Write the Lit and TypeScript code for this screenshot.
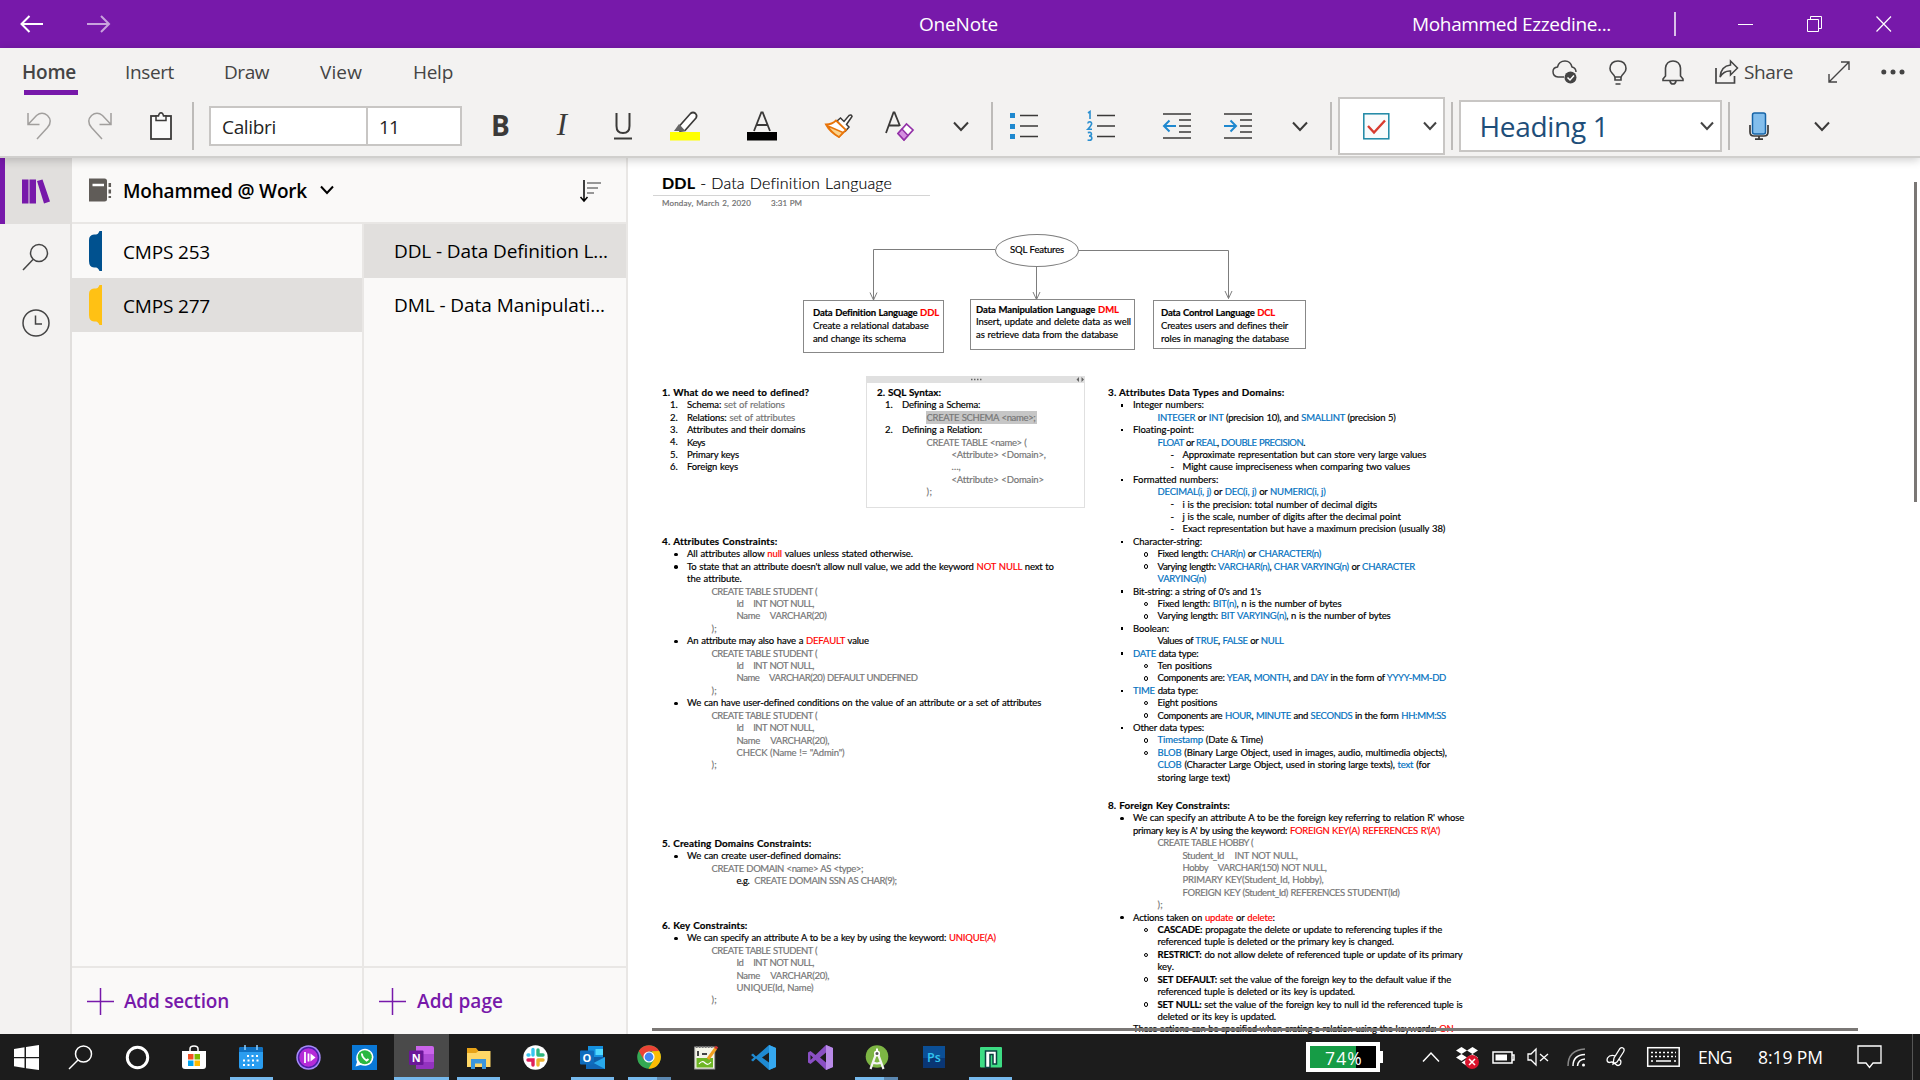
import { LitElement, html, svg, css, nothing } from "lit";
import type { SVGTemplateResult, TemplateResult } from "lit";
import { customElement } from "lit/decorators.js";

/** Inline SVG icon with a pixel-sized view box. */
const icon = (w: number, h: number, body: SVGTemplateResult, cls = "") =>
  html`<svg class="ic ${cls}" width=${w} height=${h} viewBox="0 0 ${w} ${h}" fill="none" stroke="currentColor" stroke-width="1.5">${body}</svg>`;

/** Single-line text spaced so that it fills exactly w pixels. */
const fit = (text: unknown, w: number, cls = "") => html`<span class="fit ${cls}" data-w=${w}>${text}</span>`;

const chevron = (w = 16, h = 9) =>
  icon(w, h + 2, svg`<path stroke-width="2" d="M1 1.5L${w / 2} ${h}L${w - 1} 1.5"/>`, "chev");

/** Turns "plain {r|red} plain" into styled runs: r red, u blue, g gray, b bold, k black, h highlighted. */
const rich = (s: string): TemplateResult[] =>
  s.split(/(\{[a-z]\|[^}]*\})/).filter(Boolean).map((p) => {
    const m = /^\{([a-z])\|([^}]*)\}$/.exec(p);
    return m ? html`<span class="c-${m[1]}">${m[2]}</span>` : html`${p}`;
  });

/** indent level, marker, width in px, text */
type Line = [number, string, number, string];

const N1: Line[] = [
  [0, "", 147, "1. What do we need to defined?"],
  [1, "1.", 98, "Schema: {g|set of relations}"],
  [1, "2.", 108, "Relations: {g|set of attributes}"],
  [1, "3.", 118, "Attributes and their domains"],
  [1, "4.", 18, "Keys"],
  [1, "5.", 52, "Primary keys"],
  [1, "6.", 51, "Foreign keys"],
];
const N2: Line[] = [
  [0, "", 64, "2. SQL Syntax:"],
  [1, "1.", 78, "Defining a Schema:"],
  [2, "", 109, "{h|CREATE SCHEMA <name>;}"],
  [1, "2.", 80, "Defining a Relation:"],
  [2, "", 100, "{g|CREATE TABLE <name> (}"],
  [3, "", 94, "{g|<Attribute> <Domain>,}"],
  [3, "", 9, "{g|…,}"],
  [3, "", 92, "{g|<Attribute> <Domain>}"],
  [2, "", 6, "{g|);}"],
];
const N3: Line[] = [
  [0, "", 176, "3. Attributes Data Types and Domains:"],
  [1, "sq", 71, "Integer numbers:"],
  [2, "", 238, "{u|INTEGER} or {u|INT} (precision 10), and {u|SMALLINT} (precision 5)"],
  [1, "sq", 61, "Floating-point:"],
  [2, "", 147.5, "{u|FLOAT} or {u|REAL}, {u|DOUBLE PRECISION}."],
  [3, "-", 244, "Approximate representation but can store very large values"],
  [3, "-", 227.5, "Might cause impreciseness when comparing two values"],
  [1, "sq", 85, "Formatted numbers:"],
  [2, "", 168, "{u|DECIMAL(i, j)} or {u|DEC(i, j)} or {u|NUMERIC(i, j)}"],
  [3, "-", 194.5, "i is the precision: total number of decimal digits"],
  [3, "-", 218, "j is the scale, number of digits after the decimal point"],
  [3, "-", 263, "Exact representation but have a maximum precision (usually 38)"],
  [1, "sq", 69, "Character-string:"],
  [2, "o", 163.5, "Fixed length: {u|CHAR(n)} or {u|CHARACTER(n)}"],
  [2, "o", 257.5, "Varying length: {u|VARCHAR(n)}, {u|CHAR VARYING(n)} or {u|CHARACTER}"],
  [2, "", 48.5, "{u|VARYING(n)}"],
  [1, "sq", 128, "Bit-string: a string of 0's and 1's"],
  [2, "o", 184, "Fixed length: {u|BIT(n)}, n is the number of bytes"],
  [2, "o", 233, "Varying length: {u|BIT VARYING(n)}, n is the number of bytes"],
  [1, "sq", 36, "Boolean:"],
  [2, "", 126, "Values of {u|TRUE}, {u|FALSE} or {u|NULL}"],
  [1, "sq", 65.5, "{u|DATE} data type:"],
  [2, "o", 54.5, "Ten positions"],
  [2, "o", 288.5, "Components are: {u|YEAR}, {u|MONTH}, and {u|DAY} in the form of {u|YYYY-MM-DD}"],
  [1, "sq", 65, "{u|TIME} data type:"],
  [2, "o", 60, "Eight positions"],
  [2, "o", 288.5, "Components are {u|HOUR}, {u|MINUTE} and {u|SECONDS} in the form {u|HH:MM:SS}"],
  [1, "sq", 71, "Other data types:"],
  [2, "o", 105.5, "{u|Timestamp} (Date & Time)"],
  [2, "o", 289.5, "{u|BLOB} (Binary Large Object, used in images, audio, multimedia objects),"],
  [2, "", 272.5, "{u|CLOB} (Character Large Object, used in storing large texts), {u|text} (for"],
  [2, "", 72.5, "storing large text)"],
];
const student: Line[] = [
  [2, "", 105.5, "{g|CREATE TABLE STUDENT (}"],
  [3, "", 77.5, "{g|Id    INT NOT NULL,}"],
];
const close: Line = [2, "", 5.5, "{g|);}"];
const N4: Line[] = [
  [0, "", 115, "4. Attributes Constraints:"],
  [1, "dot", 225.5, "All attributes allow {r|null} values unless stated otherwise."],
  [1, "dot", 366.5, "To state that an attribute doesn't allow null value, we add the keyword {r|NOT NULL} next to"],
  [1, "", 54.5, "the attribute."],
  ...student,
  [3, "", 90, "{g|Name    VARCHAR(20)}"],
  close,
  [1, "dot", 181.5, "An attribute may also have a {r|DEFAULT} value"],
  ...student,
  [3, "", 181, "{g|Name    VARCHAR(20) DEFAULT UNDEFINED}"],
  close,
  [1, "dot", 353.5, "We can have user-defined conditions on the value of an attribute or a set of attributes"],
  ...student,
  [3, "", 92.5, "{g|Name    VARCHAR(20),}"],
  [3, "", 108, "{g|CHECK (Name != \"Admin\")}"],
  close,
];
const N5: Line[] = [
  [0, "", 149.5, "5. Creating Domains Constraints:"],
  [1, "dot", 153.5, "We can create user-defined domains:"],
  [2, "", 151.5, "{g|CREATE DOMAIN <name> AS <type>;}"],
  [3, "", 160, "e.g.  {g|CREATE DOMAIN SSN AS CHAR(9);}"],
];
const N6: Line[] = [
  [0, "", 85.5, "6. Key Constraints:"],
  [1, "dot", 308.5, "We can specify an attribute A to be a key by using the keyword: {r|UNIQUE(A)}"],
  ...student,
  [3, "", 92.5, "{g|Name    VARCHAR(20),}"],
  [3, "", 77, "{g|UNIQUE(Id, Name)}"],
  close,
];
const N8: Line[] = [
  [0, "", 122, "8. Foreign Key Constraints:"],
  [1, "dot", 331, "We can specify an attribute A to be the foreign key referring to relation R' whose"],
  [1, "", 307, "primary key is A' by using the keyword: {r|FOREIGN KEY(A) REFERENCES R'(A')}"],
  [2, "", 95.5, "{g|CREATE TABLE HOBBY (}"],
  [3, "", 115, "{g|Student_Id    INT NOT NULL,}"],
  [3, "", 144, "{g|Hobby    VARCHAR(150) NOT NULL,}"],
  [3, "", 141, "{g|PRIMARY KEY(Student_Id, Hobby),}"],
  [3, "", 217, "{g|FOREIGN KEY (Student_Id) REFERENCES STUDENT(Id)}"],
  close,
  [1, "dot", 142, "Actions taken on {r|update} or {r|delete}:"],
  [2, "o", 284.5, "{b|CASCADE:} propagate the delete or update to referencing tuples if the"],
  [2, "", 236.5, "referenced tuple is deleted or the primary key is changed."],
  [2, "o", 305, "{b|RESTRICT:} do not allow delete of referenced tuple or update of its primary"],
  [2, "", 16.5, "key."],
  [2, "o", 293.5, "{b|SET DEFAULT:} set the value of the foreign key to the default value if the"],
  [2, "", 197.5, "referenced tuple is deleted or its key is updated."],
  [2, "o", 305, "{b|SET NULL:} set the value of the foreign key to null id the referenced tuple is"],
  [2, "", 118.5, "deleted or its key is updated."],
  [1, "dot", 321, "These actions can be specified when crating a relation using the keywords: {r|ON}"],
];

const I = {
  back: icon(24, 18, svg`<path stroke-width="2" d="M23 9H1.5M9.5 1L1.5 9L9.5 17"/>`),
  fwd: icon(24, 18, svg`<path stroke-width="2" d="M0 9H22M14 1L22 9L14 17"/>`, "faded"),
  undo: icon(24, 28, svg`<path d="M1 1V12.5H12.5M1 12.5L9.5 3.5Q15-1 20.500 3.500Q26 9 20.500 15.500L10 27"/>`, "dim"),
  redo: icon(24, 28, svg`<path d="M23 1V12.500H11.500M23 12.500L14.500 3.500Q9-1 3.500 3.500Q-2 9 3.500 15.500L14 27"/>`, "dim"),
  clip: icon(22, 28, svg`<rect x="1" y="4" width="20" height="23" fill="#fafafa" stroke-width="1.800"/><path fill="#fafafa" d="M6 8.500V4H8.500Q9 .8 11 .8Q13 .8 13.500 4H16V8.500Z"/>`),
  hl: icon(30, 30, svg`<path fill="#fff" stroke-width="1.700" d="M9 15.500L20.500 2.500Q23 .5 25.500 2.500Q27.500 4.500 26 7L15 19.500L10 20Z"/><path fill="#666" stroke="none" d="M9 13L15.500 20H4Z"/><rect y="21" width="30" height="8.500" fill="#ff0" stroke="none"/>`),
  fc: icon(30, 30, svg`<path stroke-width="1.800" d="M7 20L14.300 1.500H15.700L23 20M9.500 14H20.500"/><rect y="21" width="30" height="8.500" fill="#000" stroke="none"/>`),
  brush: icon(28, 26, svg`<path fill="#fff" d="M12 8L15.500 5L19 8.500L24 2.500Q26.500 1 27 3.500L21.500 11.500L24 14L20.500 18Z"/><path stroke="#e8750a" stroke-width="1.800" fill="#fff" d="M1 11.500Q7 11.500 11 7.500L21 17L14 24Q5 19 1 11.500Z"/><path fill="#fbd38c" stroke="#e8750a" d="M3 13L18 19.500L14 24Q6 19 3 13Z"/>`),
  clear: icon(30, 30, svg`<path stroke-width="1.800" d="M1 22L8.500 1.500H9.500L15 15M4 14.500H14.500"/><path fill="#fff" stroke="#9331a8" stroke-width="1.700" d="M13 22.500L21.500 13L28 19L19 29Z"/><path fill="#d48fe0" stroke="#9331a8" d="M13 22.500L17 18L23 24.500L19 29Z"/>`),
  bullets: icon(28, 28, svg`<path fill="#1e88cf" stroke="none" d="M0 1h5v5h-5zM0 12h5v5h-5zM0 22h5v5h-5z"/><path stroke-width="1.700" d="M10 3.500H28M10 14H28M10 24.500H28"/>`),
  numbers: icon(28, 32, svg`<path stroke="#2b8fd0" stroke-width="1.600" d="M1 3L3 1.500V9M.8 13.500Q1 11.800 2.800 11.800Q4.800 12 4.600 14Q4 16 .8 19.200H5M.8 22.600Q4.500 21.800 4.500 24.200Q4.300 26 2 26Q5 26 4.800 28.500Q4.300 31 .6 30"/><path stroke-width="1.700" d="M10 5.500H28M10 16H28M10 26.500H28"/>`),
  outdent: icon(28, 28, svg`<path stroke-width="1.700" d="M0 2H28M16 8H28M16 14H28M16 20H28M0 26H28"/><path stroke="#1e88cf" stroke-width="2" d="M13 14H1M6.500 8.500L1 14L6.500 19.500"/>`),
  indent: icon(28, 28, svg`<path stroke-width="1.700" d="M0 2H28M16 8H28M16 14H28M16 20H28M0 26H28"/><path stroke="#1e88cf" stroke-width="2" d="M0 14H12M6.500 8.500L12 14L6.500 19.500"/>`),
  check: icon(27, 27, svg`<rect x=".8" y=".8" width="25" height="25" fill="#f9fbfc" stroke="#1e87a5"/><path stroke="#d83b2f" stroke-width="2.400" d="M5 13L11 19.500L22 7.500"/>`),
  mic: icon(20, 28, svg`<rect x="3.500" y="1" width="13" height="21" rx="2" fill="#83beec" stroke="#1664a7"/><path stroke-width="1.700" d="M1 13V20Q1 24 5 24H15Q19 24 19 20V13M10 24V27M6 27.200H14"/>`),
  cloud: icon(25, 24, svg`<path d="M12 17H6Q1 16.500 1 11.500Q1 7.500 5.500 7Q7 1 13 1Q18.500 1 20 7Q24 8 24 12"/><circle cx="18.500" cy="17.500" r="6" fill="#444" stroke="none"/><path stroke="#fff" stroke-width="1.500" d="M15.500 17.500L18 20L22 15.500"/>`),
  bulb: icon(18, 25, svg`<path d="M6 20V17.500Q5.500 15.500 3 13Q1 11 1 8.500Q1.500 1 9 1Q16.500 1 17 8.500Q17 11 15 13Q12.500 15.500 12 17.500V20ZM6 17H12M6.500 24H11.500" stroke-width="1.600"/>`),
  bell: icon(22, 25, svg`<path stroke-width="1.600" d="M1 20.500V19L3.500 16V8Q4.500 1 11 1Q17.500 1 18.500 8V16L21 19V20.500ZM8 21Q8.500 24 11 24Q13.500 24 14 21"/>`),
  share: icon(24, 24, svg`<path stroke-width="1.700" d="M1 8V23H19.500V16"/><path d="M15.500 1L22.500 8L15.500 15V11Q9 10.500 5 17Q6 6 15.500 5Z"/>`),
  expand: icon(22, 22, svg`<path stroke-width="1.400" d="M1 21L21 1M13 1H21V9M1 13V21H9"/>`),
  dots: icon(24, 6, svg`<g fill="#444" stroke="none"><circle cx="2.800" cy="3" r="2.500"/><circle cx="12" cy="3" r="2.500"/><circle cx="21" cy="3" r="2.500"/></g>`),
  books: icon(29, 25, svg`<path fill="#7719aa" stroke="none" d="M0 .5h6.500v24h-6.500zM7.500 .5h6.500v24h-6.500zM15 2L20.500.5L28 22.500L22 24.500Z"/>`),
  search: icon(27, 28, svg`<circle cx="17" cy="10" r="8.500"/><path d="M11 16.500L1 27"/>`),
  clock: icon(28, 28, svg`<circle cx="14" cy="14" r="13"/><path d="M13.500 6.500V15H20"/>`),
  notebook: icon(23, 24, svg`<path fill="#605c58" stroke="none" d="M0 .5H15.500Q18 .5 18 3V21Q18 23.500 15.500 23.500H0Z"/><path stroke="#fff" stroke-width="2.500" d="M3.500 7H15"/><path stroke="#605c58" stroke-width="2.500" stroke-dasharray="4 2.500" d="M20.800 5V20"/>`),
  sort: icon(22, 23, svg`<path d="M4 0V21M.5 17L4 21L7.500 17"/><path stroke="#777" d="M7 3H21M7 8H18M7 13H14"/>`),
  plus: icon(27, 27, svg`<path stroke-width="1.500" d="M13.500 0V27M0 13.500H27"/>`),
  tab: icon(13, 40, svg`<path fill="currentColor" stroke="none" d="M13 0V40H10.500Q9 36.500 7 36.500H5Q0 36 0 30V9Q0 4 5 3.500H7Q9 3.500 10.500 0Z"/>`),
};

const T = {
  win: icon(25, 25, svg`<path fill="#fff" stroke="none" d="M0 4L10.500 2.300V12H0ZM12 2L25 0V12H12ZM0 13.200H10.500V23L0 21.300ZM12 13.200H25V25L12 23.200Z"/>`),
  search: icon(25, 25, svg`<circle cx="15.500" cy="9" r="8"/><path d="M10 15L1 24"/>`),
  cortana: icon(25, 25, svg`<circle cx="12.500" cy="12.500" r="10.200" stroke-width="3"/>`),
  store: icon(24, 25, svg`<path d="M8 6V4Q8 1 12 1Q16 1 16 4V6"/><path fill="#fff" stroke="none" d="M0 6H24V21Q24 24 21 24H3Q0 24 0 21Z"/><g stroke="none"><path fill="#f25022" d="M6 9h5.500v5.500h-5.500z"/><path fill="#7fba00" d="M12.500 9h5.500v5.500h-5.500z"/><path fill="#00a4ef" d="M6 15.500h5.500v5.500h-5.500z"/><path fill="#ffb900" d="M12.500 15.500h5.500v5.500h-5.500z"/></g>`),
  cal: icon(24, 25, svg`<rect y="2" width="24" height="22" rx="2" fill="#2a9df0" stroke="none"/><path fill="#1070c0" stroke="none" d="M0 7V4Q0 2 2 2H22Q24 2 24 4V7Z"/><path stroke="#8fd0ff" d="M6 0V5M18 0V5"/><path stroke="#fff" stroke-width="2" stroke-dasharray="2 2.500" d="M8 11H20M4 15.500H20M4 20H16"/>`),
  groove: icon(25, 25, svg`<circle cx="12.500" cy="12.500" r="12.200" fill="#a78bfa" stroke="none"/><circle cx="12.500" cy="12.500" r="10" fill="#b52bd8" stroke="#4b1fa8" stroke-width="1.500"/><path stroke="#fff" stroke-width="1.800" d="M9 7V18M12.500 8.500V16.500"/><path fill="#fff" stroke="none" d="M14.500 8.500L19.500 12.500L14.500 16.500Z"/>`),
  wa: icon(25, 25, svg`<rect width="25" height="25" fill="#0a78d6" stroke="none"/><path fill="#fff" stroke="none" d="M3.500 21.500L5 17Q3 12 6 7.500Q9.500 3 15 4Q21 6 21.500 12Q21 19.500 14 20.800Q11 21 8.500 20Z"/><circle cx="12.800" cy="12.300" r="7" fill="#2bb742" stroke="none"/><path stroke="#fff" stroke-width="2" d="M10 8.500Q9.500 12 14.500 15.500L16.500 14"/>`),
  one: icon(25, 25, svg`<path fill="#ca64ea" stroke="none" d="M7 1H23Q25 1 25 3V11H7Z"/><path fill="#ae4bd5" stroke="none" d="M7 9H25V17H7Z"/><path fill="#9332bf" stroke="none" d="M7 17H25V22Q25 24 23 24H7Z"/><rect y="5.500" width="14.500" height="14.500" rx="1" fill="#6b1799" stroke="none"/><text class="glyph" x="7.200" y="16.800" font-size="11">N</text>`),
  files: icon(25, 25, svg`<path fill="#e8a317" stroke="none" d="M1 3H10L12.500 6H24V12H1Z"/><path fill="#ffd766" stroke="none" d="M1 8H10L12.500 6H24.500V22H1Z"/><path fill="#3a96dd" stroke="none" d="M5 24V14H20V24H16V18.500H9V24Z"/>`),
  slack: icon(25, 25, svg`<circle cx="12.500" cy="12.500" r="12.200" fill="#fff" stroke="none"/><g stroke-width="3.400" stroke-linecap="round"><path stroke="#36c5f0" d="M10 4.500V10M5 10H6"/><path stroke="#2eb67d" d="M15 5V10M15 10H20"/><path stroke="#e01e5a" d="M10 20V15H5"/><path stroke="#ecb22e" d="M15 15V20M15 15H20"/></g>`),
  outlook: icon(25, 25, svg`<path fill="#1490df" stroke="none" d="M8 1H23V13H8Z"/><path fill="#50d9ff" stroke="none" d="M15.500 4H23V10H15.500Z"/><path fill="#0f5ea8" stroke="none" d="M5 12H25L14 20Z"/><path fill="#28a8ea" stroke="none" d="M25 12V24H6V22Z"/><path fill="#1066b5" stroke="none" d="M6 14L25 24H6Z"/><rect y="5.500" width="14" height="14" rx="1" fill="#0f6cbd" stroke="none"/><text class="glyph" x="7" y="16.500" font-size="11">O</text>`),
  chrome: icon(24, 24, svg`<g stroke="none"><circle cx="12" cy="12" r="11.800" fill="#34a853"/><path fill="#ea4335" d="M1.800 6A11.800 11.800 0 0 1 22.200 6L12 6.500L7 15Z"/><path fill="#fbbc05" d="M22.200 6A11.800 11.800 0 0 1 11.500 23.800L17 14.500L15 6.200Z"/><circle cx="12" cy="12" r="5.600" fill="#fff"/><circle cx="12" cy="12" r="4.400" fill="#4285f4"/></g>`),
  npp: icon(24, 25, svg`<rect x=".7" y="2" width="20" height="22" fill="#f4f4e8" stroke="#999" stroke-width="1"/><path fill="#6db524" stroke="none" d="M2.500 13H19V22.500H2.500Z"/><path stroke="#fff" stroke-width="1.200" d="M5 19Q8 15 11 18T17 17"/><path stroke="#444" stroke-width="2" d="M4 6V11M8 9H13"/><path stroke="#f0a020" stroke-width="3" d="M22 3L14 14"/><path stroke="#c33" stroke-width="3" d="M23 1.500L21.500 3.700"/><path stroke="#777" stroke-dasharray="1.500 1.500" stroke-width="2" d="M2 2H20"/>`),
  code: icon(25, 25, svg`<path fill="#1f8ad2" stroke="none" d="M18 0L25 3V22L18 25L5 13.500L2 16.500L0 15L3 12.500L0 10L2 8.500L5 11.500ZM18 7.500L11 12.500L18 17.500Z"/><path fill="#35a8f0" stroke="none" d="M18 0L25 3V22L18 25Z"/>`),
  vs: icon(25, 25, svg`<path fill="#8a4fc4" stroke="none" fill-rule="evenodd" d="M18 0L25 3V22L18 25L7.500 15L2.500 19L0 17.500V7.500L2.500 6L7.500 10ZM18 7.500L12 12.500L18 17.500ZM2.500 10V15L5 12.500Z"/><path fill="#b98ae8" stroke="none" d="M18 0L25 3V22L18 25Z"/>`),
  studio: icon(24, 25, svg`<circle cx="12" cy="11.500" r="11.300" fill="#7db544" stroke="none"/><path stroke="#f4f4f4" stroke-width="2.200" d="M11 9L5.500 24M13 9L18.500 24M7.500 17Q12 20 16.500 17"/><circle cx="12" cy="8.500" r="2.300" fill="#555" stroke="#fff"/><path stroke="#fff" stroke-width="2" d="M12 3.500V6"/>`),
  ps: icon(22, 22, svg`<rect width="22" height="22" fill="#0a3674" stroke="none"/><rect width="22" height="12" fill="#0b4f96" stroke="none"/><text class="glyph ps" x="11" y="15.500" font-size="12.500">Ps</text>`),
  green: icon(22, 21, svg`<rect width="22" height="20.500" rx="1" fill="#3ddc84" stroke="none"/><path fill="#fff" stroke="#0b4040" stroke-width="1.500" d="M5.500 20.500V4H16.500V17H13V7.500H10V17V20.500Z"/>`),
};

const apps: [SVGTemplateResult | TemplateResult, string][] = [
  [T.win, ""], [T.search, ""], [T.cortana, ""], [T.store, ""], [T.cal, "run"], [T.groove, ""], [T.wa, ""],
  [T.one, "active"], [T.files, "run"], [T.slack, ""], [T.outlook, "run"], [T.chrome, "run many"], [T.npp, ""],
  [T.code, ""], [T.vs, ""], [T.studio, "run many"], [T.ps, ""], [T.green, "run"],
];

@customElement("app-root")
export class AppRoot extends LitElement {
  static styles = css`
    :host { display: block; width: 1920px; height: 1080px; overflow: hidden; background: #fff;
      font: 19px "Open Sans", "Noto Sans", sans-serif; color: #000; }
    * { box-sizing: border-box; }
    .app { display: flex; flex-direction: column; height: 1080px; }
    .ic { display: block; flex: none; overflow: visible; }
    .fit { display: inline-block; white-space: pre; flex: none; }
    .semi { font-weight: 600; }

    .titlebar { display: flex; align-items: center; height: 48px; flex: none; background: #7719aa; color: #fff; padding-left: 20px; }
    .titlebar .faded { opacity: .6; margin-left: 43px; }
    .appname { margin-left: 808px; width: 79px; }
    .account { margin-left: 414px; width: 199px; }
    .vbar { width: 2px; height: 24px; background: #d9bfe8; margin-left: 63px; }
    .win { margin-left: 62px; }
    .win + .win { margin-left: 53px; }

    .ribbon { flex: none; height: 110px; background: #f3f2f1; color: #444; border-bottom: 2px solid #d0cfcd;
      box-shadow: 0 2px 9px rgba(0, 0, 0, .2); position: relative; z-index: 2; }
    .tabs { display: flex; height: 48px; align-items: center; padding-left: 23px; }
    .tab { display: flex; align-items: center; height: 48px; margin-right: 51px; }
    .tab.on { border-bottom: 5px solid #7719aa; height: 46px; padding-top: 5px; margin: 0 47px 0 1px; font-weight: 600; }
    .tab.on .fit { margin: 0 2px 0 -2px; }
    .tab:nth-child(2) { margin-right: 50px; }
    .quick { display: flex; align-items: center; margin-left: auto; padding-right: 15px; }
    .quick > :nth-child(2) { margin-left: 32px; }
    .quick > :nth-child(3) { margin-left: 35px; }
    .quick > :nth-child(4) { margin-left: 31px; }
    .quick > :nth-child(5) { margin-left: 5px; }
    .quick > :nth-child(6) { margin-left: 35px; }
    .quick > :nth-child(7) { margin-left: 31px; }

    .tools { display: flex; align-items: center; height: 60px; color: #3b3a39; }
    .dim { color: #a19f9d; }
    .undo { margin-left: 27px; }
    .redo { margin-left: 37px; }
    .clip { margin-left: 38px; }
    .sep { width: 2px; height: 48px; background: #bdbbb9; flex: none; }
    .box { display: flex; align-items: center; background: #fff; border: 2px solid #c8c6c4; flex: none; color: #252423; }
    .font { width: 253px; height: 40px; margin-left: 15px; }
    .family { width: 157px; height: 36px; display: flex; align-items: center; padding: 1px 0 0 11px; border-right: 2px solid #c8c6c4; }
    .size { padding: 1px 0 0 11px; }
    .fmt { font-size: 28px; line-height: 30px; flex: none; text-align: center; padding-bottom: 2px; }
    .bold { font-weight: 700; width: 19px; margin-left: 29px; }
    .ital { font-family: "Liberation Serif", serif; font-style: italic; font-size: 31px; width: 14px; margin-left: 45px; }
    .under { width: 18px; margin-left: 45px; }
    .s1 { margin-left: 20px; } .s2 { margin-left: 22px; } .s3 { margin-left: 6px; }
    .g-hl { margin-left: 38px; } .g-fc { margin-left: 47px; } .g-br { margin-left: 47.5px; } .g-cl { margin-left: 32px; }
    .g-c1 { margin-left: 38px; } .g-bu { margin-left: 17px; } .g-nu { margin-left: 49px; } .g-ou { margin-left: 48px; }
    .g-in { margin-left: 33px; } .g-c2 { margin-left: 40px; } .g-mi { margin-left: 19px; } .g-c3 { margin-left: 45px; }
    .todo { width: 107px; height: 58px; margin-left: 6px; padding-left: 23px; gap: 33px; }
    .style { width: 263px; height: 52px; margin-left: 6px; padding: 0 6px 0 19px; justify-content: space-between;
      font-size: 28px; color: #1e4e79; }
    .box .chev { color: #444; }

    .main { display: flex; flex: 1; min-height: 0; }
    .rail { width: 72px; background: #f3f2f1; border-right: 2px solid #e1dfdd; color: #444; flex: none; }
    .rail div { display: flex; align-items: center; height: 66px; padding-left: 22px; }
    .rail .sel { background: #e1dfdd; border-left: 5px solid #7719aa; padding-left: 17px; width: 72px; }
    .nav { width: 556px; background: #faf9f8; border-right: 2px solid #e9e7e5; display: flex; flex-direction: column; flex: none; }
    .book { display: flex; align-items: center; height: 66px; border-bottom: 2px solid #e9e7e5; padding: 0 24px 0 17px; }
    .book .name { margin: 2px 13px 0 11px; }
    .book .order { margin-left: auto; padding-top: 2px; }
    .lists { display: flex; flex: 1; }
    .list { display: flex; flex-direction: column; }
    .list.secs { width: 292px; border-right: 2px solid #e9e7e5; }
    .list.pages { flex: 1; }
    .row { display: flex; align-items: center; height: 54px; }
    .secs .row { padding-left: 17px; gap: 21px; }
    .secs .row .fit { padding-top: 1px; }
    .pages .row { padding-left: 30px; }
    .row.on { background: #e1dfdd; }
    .blue { color: #00518f; } .gold { color: #ffc114; }
    .add { display: flex; align-items: center; gap: 10px; height: 68px; margin-top: auto; border-top: 2px solid #e9e7e5;
      color: #7719aa; font-weight: 600; padding-left: 15px; }
    .pages .add { gap: 11px; }

    .canvas { flex: 1; position: relative; overflow: hidden; background: #fff; font-family: Lato, "Open Sans", sans-serif; font-size: 9.5px;
      word-spacing: .5px; -webkit-text-stroke: .18px currentColor; }
    .canvas > * { position: absolute; }
    .ptitle { left: 25px; top: 12px; width: 277px; height: 26px; border-bottom: 1px solid #d4d4d4; font-size: 16px; padding-left: 9px; line-height: 26px; }
    .ptitle .fit { font-weight: 300; }
    .pdate { left: 34px; top: 39px; font-size: 8px; line-height: 12px; color: #6f6f6f; display: flex; gap: 20px; }
    .note { line-height: 12.41px; }
    .ln { display: flex; height: 12.41px; padding-top: 1px; }
    .ln.l0 { font-weight: 700; font-size: 9.9px; padding-top: 0; }
    .l1 { padding-left: 8px; } .l2 { padding-left: 32.5px; } .l3 { padding-left: 57.5px; }
    .mk { width: 17px; height: 12px; flex: none; display: flex; align-items: center; }
    .dot, .sq, .o { display: block; width: 3.500px; height: 3.500px; margin-left: 4px; background: #000; border-radius: 50%; }
    .sq { width: 2.500px; height: 2.500px; margin-left: 4.500px; border-radius: 0; }
    .o { width: 4.500px; height: 4.500px; margin-left: 3px; background: none; border: 1px solid #000; }
    .dash { margin-left: 5px; }
    .c-r { color: #f00; } .c-u { color: #0070c0; } .c-g { color: #767676; } .c-b { font-weight: 700; }
    .c-h { color: #767676; background: #c6c6c6; box-shadow: 0 0 0 1px #c6c6c6; }
    .n1 { left: 34px; top: 228px; }
    .n2 { left: 238px; top: 218px; width: 219px; height: 132px; border: 1px solid #e0e0e0; }
    .n2 .grip { height: 7px; margin: -1px -1px 3px; background: #e0e0e0; display: flex; justify-content: flex-end; align-items: center; }
    .n2 .note { padding-left: 10px; }
    .n3 { left: 480px; top: 228px; } .n4 { left: 34px; top: 377px; } .n5 { left: 34px; top: 679px; }
    .n6 { left: 34px; top: 761px; } .n8 { left: 480px; top: 641px; }
    .wires { left: 0; top: 0; color: #7d7d7d; }
    .oval { left: 367px; top: 76px; width: 84px; height: 33px; border: 1px solid #7f7f7f; border-radius: 50%; line-height: 29px; padding-left: 14px; }
    .card { border: 1px solid #888; line-height: 12.3px; display: flex; flex-direction: column; align-items: flex-start; padding-left: 9px; }
    .card b { display: flex; }
    .k1 b, .k3 b { margin-bottom: 1px; }
    .k1 { left: 175px; top: 142px; width: 141px; height: 53px; padding-top: 6px; }
    .k2 { left: 342px; top: 141px; width: 165px; height: 51px; padding-top: 4px; padding-left: 5px; }
    .k3 { left: 525px; top: 142px; width: 153px; height: 49px; padding-top: 6px; padding-left: 7px; }
    .vs { right: 3px; top: 24px; width: 3px; height: 320px; background: #7a7775; }
    .hs { left: 24px; top: 870px; width: 1206px; height: 3px; background: #7a7775; }

    .taskbar { display: flex; height: 46px; background: #1c1c1c; color: #fff; flex: none; }
    .app-i { width: 56.9px; height: 46px; display: flex; align-items: center; justify-content: center; position: relative; flex: none; }
    .apps { display: flex; width: 1306px; }
    .app-i:first-child { width: 53.500px; }
    .app-i:nth-child(n + 2) { left: -1.500px; }
    .app-i.run::after { content: ""; position: absolute; left: 7px; right: 7px; bottom: 0; height: 3px; background: #76b9ed; }
    .app-i.many::after { background: linear-gradient(90deg, #76b9ed 68%, #5b87b0 68%); }
    .app-i.active { background: linear-gradient(#4a4a4a, #4a4a4a) center / 55px 100% no-repeat; }
    .app-i.active::after { content: ""; position: absolute; left: 1px; right: 1px; bottom: 0; height: 3px; background: #76b9ed; }
    .glyph { fill: #fff; stroke: none; font-family: "Open Sans", sans-serif; font-weight: 700; text-anchor: middle; }
    .ps { fill: #31c5f0; font-weight: 600; }
    .tray { display: flex; align-items: center; flex: 1; font-size: 17.500px; }
    .batt { width: 74px; height: 30px; border: 4px solid #fff; background: linear-gradient(90deg, #169c46 70%, #000 70%);
      display: flex; justify-content: center; align-items: center; flex: none; padding: 2px 0 0 2px; }
    .tip { width: 3px; height: 12px; background: #fff; flex: none; }
    .tray > :nth-child(3) { margin-left: 39px; }
    .tray > :nth-child(4) { margin-left: 16px; }
    .tray > :nth-child(5) { margin-left: 13px; }
    .tray > :nth-child(6) { margin-left: 12px; }
    .tray > :nth-child(7) { margin-left: 18px; }
    .tray > :nth-child(8) { margin-left: 20px; }
    .tray > :nth-child(9) { margin-left: 20px; }
    .tray > :nth-child(10) { margin-left: 18px; }
    .tray > :nth-child(11) { margin-left: 26px; }
    .tray > :nth-child(12) { margin-left: 34px; }
    .edge { width: 1px; height: 46px; background: #555; margin-left: 30px; }
  `;

  protected firstUpdated() {
    this.spaceText();
    document.fonts?.ready.then(() => this.spaceText());
  }

  /** Adjusts letter spacing so each fitted run takes its declared width. */
  private spaceText() {
    this.renderRoot.querySelectorAll<HTMLElement>(".fit").forEach((el) => {
      el.style.letterSpacing = "0px";
      const w = Number(el.dataset.w);
      const n = el.textContent?.length ?? 1;
      el.style.letterSpacing = `${((w - el.getBoundingClientRect().width) / n).toFixed(4)}px`;
    });
  }

  private marker(m: string) {
    if (m === "dot" || m === "sq" || m === "o") return html`<i class=${m}></i>`;
    if (m === "-") return html`<span class="dash">-</span>`;
    return m;
  }

  private note(lines: Line[], cls = "") {
    return html`<div class="note ${cls}">${lines.map(([lvl, m, w, t]) => html`<div class="ln l${lvl}">${lvl ? html`<span class="mk">${this.marker(m)}</span>` : nothing}${fit(rich(t), w)}</div>`)}</div>`;
  }

  render() {
    return html`<div class="app">
      <header class="titlebar">
        ${I.back}${I.fwd}
        <div class="appname">${fit("OneNote", 79)}</div>
        <div class="account">${fit("Mohammed Ezzedine...", 199)}</div>
        <div class="vbar"></div>
        ${icon(16, 16, svg`<path stroke-width="1" d="M0 8.500H15"/>`, "win")}
        ${icon(16, 16, svg`<path stroke-width="1" d="M.5 3.500H11.500V15.500H.5ZM3.500 3.500V.5H14.500V12.500H11.500"/>`, "win")}
        ${icon(16, 16, svg`<path stroke-width="1.200" d="M.5 .5L15 15.500M15 .5L.5 15.500"/>`, "win")}
      </header>

      <section class="ribbon">
        <nav class="tabs">
          <div class="tab on">${fit("Home", 54)}</div>
          <div class="tab">${fit("Insert", 49)}</div>
          <div class="tab">${fit("Draw", 45)}</div>
          <div class="tab">${fit("View", 42)}</div>
          <div class="tab">${fit("Help", 40)}</div>
          <div class="quick">
            ${I.cloud}${I.bulb}${I.bell}${I.share}${fit("Share", 49)}${I.expand}${I.dots}
          </div>
        </nav>
        <div class="tools">
          <div class="undo">${I.undo}</div><div class="redo">${I.redo}</div><div class="clip">${I.clip}</div>
          <div class="sep s1"></div>
          <div class="box font"><div class="family">${fit("Calibri", 54)}</div><div class="size">${fit("11", 20)}</div></div>
          <div class="fmt bold">B</div><div class="fmt ital">I</div>
          <div class="under">${icon(18, 28, svg`<path stroke-width="2" d="M2.500 1V14Q2.500 21 9 21Q15.500 21 15.500 14V1M0 26.500H18"/>`)}</div>
          <div class="g-hl">${I.hl}</div><div class="g-fc">${I.fc}</div><div class="g-br">${I.brush}</div><div class="g-cl">${I.clear}</div>
          <div class="g-c1">${chevron()}</div>
          <div class="sep s2"></div>
          <div class="g-bu">${I.bullets}</div><div class="g-nu">${I.numbers}</div><div class="g-ou">${I.outdent}</div><div class="g-in">${I.indent}</div>
          <div class="g-c2">${chevron()}</div>
          <div class="sep s2"></div>
          <div class="box todo">${I.check}${chevron(14, 8)}</div>
          <div class="sep s3"></div>
          <div class="box style">${fit("Heading 1", 129)}${chevron(14, 8)}</div>
          <div class="sep s3"></div>
          <div class="g-mi">${I.mic}</div><div class="g-c3">${chevron()}</div>
        </div>
      </section>

      <main class="main">
        <aside class="rail"><div class="sel">${I.books}</div><div>${I.search}</div><div>${I.clock}</div></aside>
        <aside class="nav">
          <div class="book">${I.notebook}<span class="name semi">${fit("Mohammed @ Work", 184)}</span>${chevron(14, 8)}<span class="order">${I.sort}</span></div>
          <div class="lists">
            <div class="list secs">
              <div class="row"><span class="blue">${I.tab}</span>${fit("CMPS 253", 87)}</div>
              <div class="row on"><span class="gold">${I.tab}</span>${fit("CMPS 277", 87)}</div>
              <div class="add">${I.plus}${fit("Add section", 105)}</div>
            </div>
            <div class="list pages">
              <div class="row on">${fit("DDL - Data Definition L...", 214)}</div>
              <div class="row">${fit("DML - Data Manipulati...", 211)}</div>
              <div class="add">${I.plus}${fit("Add page", 86)}</div>
            </div>
          </div>
        </aside>

        <section class="canvas">
          <div class="ptitle">${fit(rich("{b|DDL} - Data Definition Language"), 230)}</div>
          <div class="pdate">${fit("Monday, March 2, 2020", 89)}${fit("3:31 PM", 31)}</div>
          ${icon(700, 200, svg`<g stroke-width="1"><path d="M367 91.500H245.500V142M242 134.500L245.500 142L249 134.500"/><path d="M408.500 109V141M405 134L408.500 141.500L412 134"/><path d="M451 92.500H600.500V140.500M597 133L600.500 140.500L604 133"/></g>`, "wires")}
          <div class="oval">${fit("SQL Features", 54)}</div>
          <div class="card k1"><b>${fit(rich("Data Definition Language {r|DDL}"), 126)}</b>${fit("Create a relational database", 116)}${fit("and change its schema", 93)}</div>
          <div class="card k2"><b>${fit(rich("Data Manipulation Language {r|DML}"), 143)}</b>${fit("Insert, update and delete data as well", 155)}${fit("as retrieve data from the database", 142)}</div>
          <div class="card k3"><b>${fit(rich("Data Control Language {r|DCL}"), 114)}</b>${fit("Creates users and defines their", 127)}${fit("roles in managing the database", 128)}</div>
          ${this.note(N1, "n1")}
          <div class="n2">
            <div class="grip">${icon(118, 7, svg`<path stroke="#666" stroke-width="1.500" stroke-dasharray="1.500 1.500" d="M4 3.500H15"/><path fill="#666" stroke="none" d="M112 1V6L109.500 3.500ZM114.500 1V6L117 3.500Z"/>`)}</div>
            ${this.note(N2)}
          </div>
          ${this.note(N3, "n3")}${this.note(N4, "n4")}${this.note(N5, "n5")}${this.note(N6, "n6")}${this.note(N8, "n8")}
          <div class="vs"></div><div class="hs"></div>
        </section>
      </main>

      <footer class="taskbar">
        <div class="apps">${apps.map(([g, c]) => html`<div class="app-i ${c}">${g}</div>`)}</div>
        <div class="tray">
          <div class="batt">${fit("74%", 38)}</div><div class="tip"></div>
          ${icon(18, 10, svg`<path d="M1 9.500L9 1L17 9.500"/>`)}
          ${icon(23, 23, svg`<path fill="#fff" stroke="none" d="M0 4.500L5.500 1L11 4.500L5.500 8ZM11 4.500L16.500 1L22 4.500L16.500 8ZM0 11.500L5.500 8L11 11.500L5.500 15ZM11 11.500L16.500 8L22 11.500L16.500 15ZM5.500 16.500L11 13L16 16.500L11 20Z"/><circle cx="16" cy="16" r="7" fill="#d9132c" stroke="none"/><path stroke="#fff" d="M13 13L19 19M19 13L13 19"/>`)}
          ${icon(23, 13, svg`<path d="M1 1H20V12H1ZM20 4H22V9H20"/><path fill="#fff" stroke="none" d="M3.500 3.500H15V9.500H3.500Z"/>`)}
          ${icon(22, 18, svg`<path stroke-width="1.300" d="M1 6H4L9 1V17L4 12H1ZM13 6L21 13M21 6L13 13"/>`)}
          ${icon(19, 19, svg`<path stroke="#888" d="M1 18Q1 2 18 1"/><path d="M6 18Q6 7 18 6.500M10.500 18Q11 11.500 18 11"/><circle cx="16.500" cy="17" r="1.500" fill="#fff" stroke="none"/>`)}
          ${icon(21, 20, svg`<path stroke-width="1.300" d="M8 11L14 1.500Q16-.5 18 2Q18.500 3.500 17.500 5L11 15L7 17ZM9.500 9Q4 7 1.500 11Q0 15 3.500 15.500Q7 14 9.500 17Q12 20 14.500 17Q16 13 12.500 12.500"/>`)}
          ${icon(33, 20, svg`<rect x=".7" y=".7" width="31.500" height="18.500"/><path stroke-dasharray="2 2" d="M4 5.500H29M4 9.500H29"/><path d="M4 14H6M9 14H24M27 14H29"/>`)}
          ${fit("ENG", 34)}${fit("8:19 PM", 65)}
          ${icon(25, 24, svg`<path stroke-width="1.300" d="M1 1H24V18H16L12.500 22.500L9 18H1Z"/>`)}
          <div class="edge"></div>
        </div>
      </footer>
    </div>`;
  }
}
